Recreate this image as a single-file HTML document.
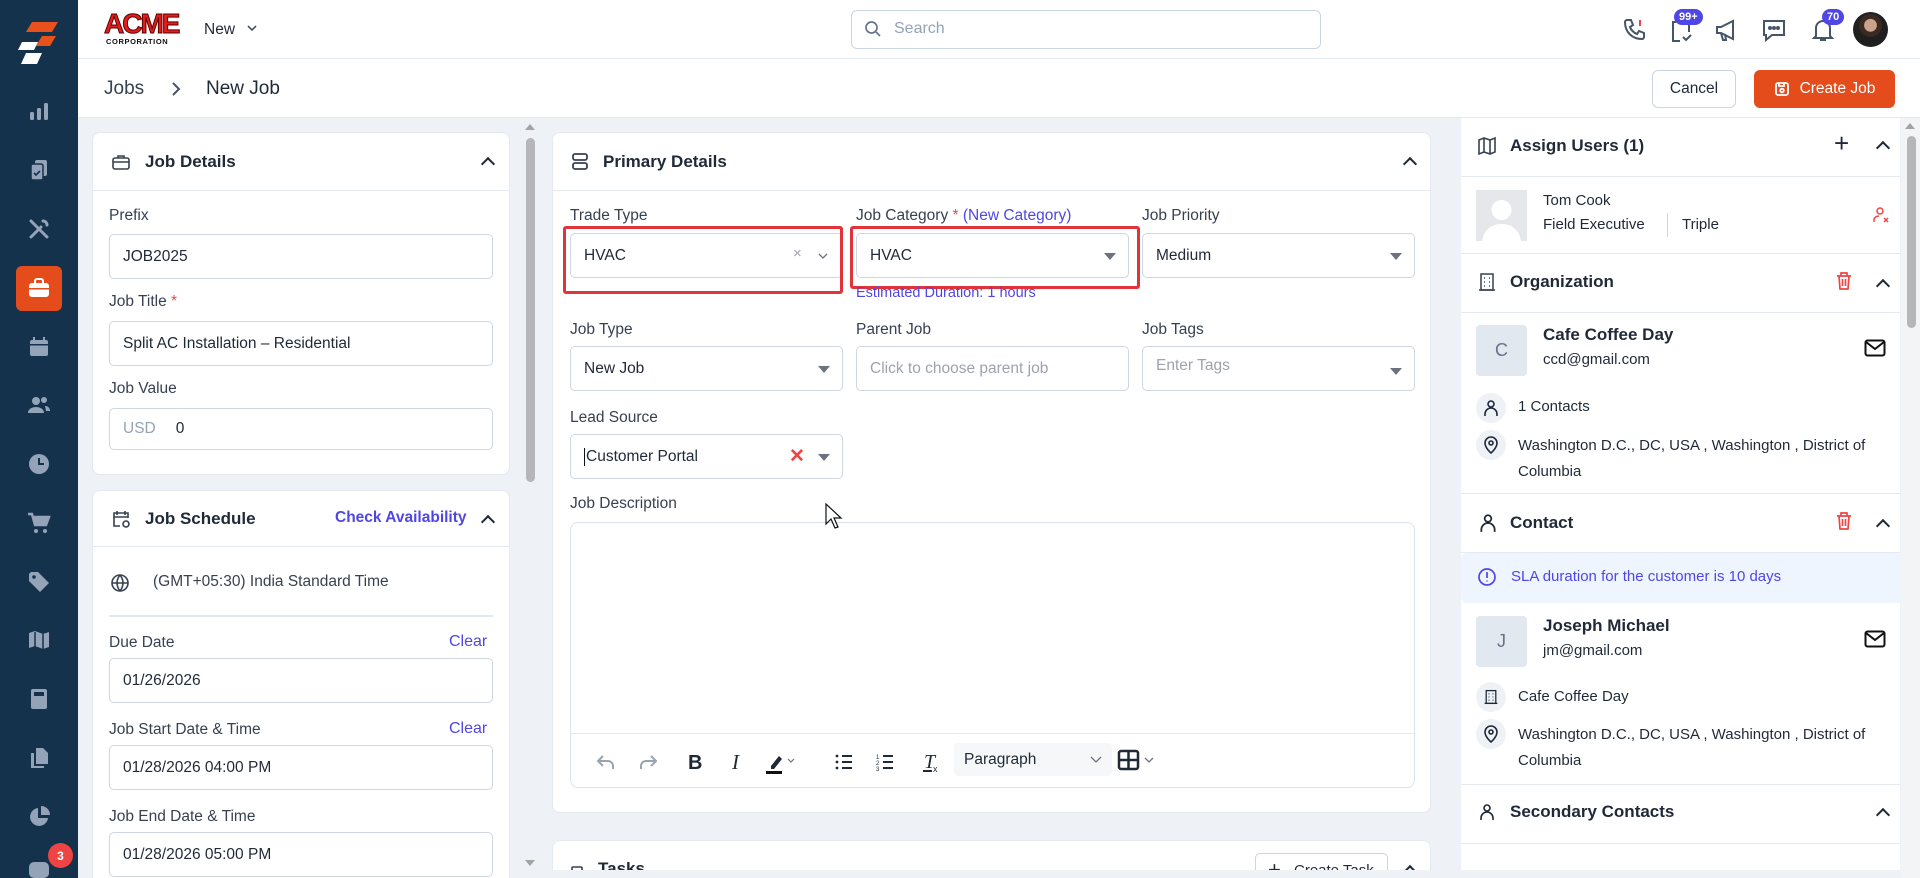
<!DOCTYPE html>
<html style="width:1920px;height:878px;overflow:hidden"><head><meta charset="utf-8"><style>
*{box-sizing:border-box;margin:0;padding:0}
body{width:1920px;height:878px;overflow:hidden;font-family:"Liberation Sans",sans-serif;color:#1f2937;background:#eef2f7;position:relative}
.a{position:absolute}
.sb{left:0;top:0;width:78px;height:878px;background:#14324b}
.ic{position:absolute;left:27px;width:24px;height:24px}
.top{left:78px;top:0;right:0;height:59px;background:#fff;border-bottom:1px solid #e2e8f0}
.bc{left:78px;top:59px;right:0;height:59px;background:#fff;border-bottom:1px solid #e2e8f0}
.card{background:#fff;border-radius:8px;border:1px solid #e5e9f0}
.hd{position:absolute;left:0;right:0;top:0;height:58px;border-bottom:1px solid #e5e9f0;display:flex;align-items:center;padding-left:18px;font-size:17px;font-weight:bold;color:#1f2937}
.lbl{position:absolute;font-size:15.5px;color:#374151}
.inp{position:absolute;height:45px;border:1px solid #cfd6e2;border-radius:5px;background:#fff;font-size:15.5px;color:#1f2937;display:flex;align-items:center;padding-left:13px}
.car{position:absolute;right:12px;top:19px;width:0;height:0;border-left:6px solid transparent;border-right:6px solid transparent;border-top:7px solid #6b7280}
.blue{color:#4f46e5}
.chev{position:absolute;width:10px;height:10px;border-left:2px solid #1f2937;border-top:2px solid #1f2937;transform:rotate(45deg)}
.rs{font-size:15px;color:#1f2937}
.hr{position:absolute;left:1461px;width:439px;height:1px;background:#e5e9f0}
.av{position:absolute;width:51px;height:51px;background:#e2e8f0;border-radius:4px;color:#64748b;font-size:18px;display:flex;align-items:center;justify-content:center}
.circ{position:absolute;width:30px;height:30px;border-radius:50%;background:#eef2f7}
.badge{position:absolute;background:#4f46e5;color:#fff;font-size:11px;font-weight:bold;border-radius:9px;padding:2px 5px}
</style></head><body>

<!-- sidebar -->
<div class="a sb">
 <svg class="a" style="left:16px;top:20px" width="46" height="46" viewBox="0 0 46 46"><polygon points="12,2 38,2 32,12 6,12" fill="#e8501c" transform="translate(4,0)"/><polygon points="26,16 40,16 34,26 20,26" fill="#e8501c"/><polygon points="6,22 22,22 18,30 2,30" fill="#fff"/><polygon points="10,33 26,33 21,44 5,44" fill="#fff"/></svg>
 <svg class="ic" style="top:99px" viewBox="0 0 24 24" fill="#94a3b8"><rect x="3" y="13" width="4" height="8" rx="1.5"/><rect x="10" y="9" width="4" height="12" rx="1.5"/><rect x="17" y="4" width="4" height="17" rx="1.5"/></svg>
 <svg class="ic" style="top:158px" viewBox="0 0 24 24" fill="#94a3b8"><rect x="8" y="2" width="12" height="16" rx="2"/><rect x="4" y="6" width="12" height="16" rx="2" stroke="#14324b" stroke-width="1.5"/><path d="M7 15l2 2 4-4" stroke="#14324b" stroke-width="1.6" fill="none"/></svg>
 <svg class="ic" style="top:217px" viewBox="0 0 24 24" fill="none" stroke="#94a3b8" stroke-width="3" stroke-linecap="round"><path d="M4 20L14 10M16 4a4 4 0 0 1 4 4M4 4l16 16"/></svg>
 <div class="a" style="left:16px;top:266px;width:46px;height:45px;background:#e44d1b;border-radius:6px"></div>
 <svg class="ic" style="top:276px" viewBox="0 0 24 24" fill="#fff"><rect x="2" y="7" width="20" height="14" rx="3"/><path d="M8 7V5a2 2 0 0 1 2-2h4a2 2 0 0 1 2 2v2" stroke="#fff" stroke-width="2" fill="none"/><rect x="2" y="12" width="20" height="1.5" fill="#e44d1b"/></svg>
 <svg class="ic" style="top:335px" viewBox="0 0 24 24" fill="#94a3b8"><rect x="3" y="5" width="18" height="16" rx="2"/><rect x="6" y="2" width="2" height="5"/><rect x="16" y="2" width="2" height="5"/><rect x="3" y="9" width="18" height="1.5" fill="#14324b"/></svg>
 <svg class="ic" style="top:393px" viewBox="0 0 24 24" fill="#94a3b8"><circle cx="9" cy="8" r="4"/><path d="M1 20c0-4 4-6 8-6s8 2 8 6z"/><circle cx="17" cy="7" r="3"/><path d="M18 13c3 0 5 2 5 5h-4z"/></svg>
 <svg class="ic" style="top:452px" viewBox="0 0 24 24"><circle cx="12" cy="12" r="10" fill="#94a3b8"/><path d="M12 6v6h5" stroke="#14324b" stroke-width="2" fill="none"/></svg>
 <svg class="ic" style="top:511px" viewBox="0 0 24 24" fill="#94a3b8"><path d="M1 3h4l3 11h11l3-8H7" stroke="#94a3b8" stroke-width="2.5" fill="#94a3b8"/><circle cx="9" cy="20" r="2"/><circle cx="18" cy="20" r="2"/></svg>
 <svg class="ic" style="top:570px" viewBox="0 0 24 24" fill="#94a3b8"><path d="M2 4v7l11 11 9-9L11 2H4z"/><circle cx="7" cy="7" r="1.8" fill="#14324b"/></svg>
 <svg class="ic" style="top:628px" viewBox="0 0 24 24" fill="#94a3b8"><path d="M2 5l6-2 8 3 6-2v15l-6 2-8-3-6 2z"/><path d="M8 4v15M16 6v15" stroke="#14324b" stroke-width="1.5"/></svg>
 <svg class="ic" style="top:687px" viewBox="0 0 24 24" fill="#94a3b8"><rect x="4" y="2" width="16" height="20" rx="2"/><rect x="7" y="5" width="10" height="4" fill="#14324b"/></svg>
 <svg class="ic" style="top:746px" viewBox="0 0 24 24" fill="#94a3b8"><path d="M9 2h7l5 5v11H9z"/><path d="M4 7h3v13h10v2H4z"/></svg>
 <svg class="ic" style="top:805px" viewBox="0 0 24 24" fill="#94a3b8"><path d="M11 3a9 9 0 1 0 10 10H11z"/><path d="M14 1v9h9a9 9 0 0 0-9-9z"/></svg>
 <svg class="ic" style="top:862px;height:16px" viewBox="0 0 24 16" fill="#94a3b8"><rect x="2" y="0" width="20" height="16" rx="5"/></svg>
 <div class="a" style="left:48px;top:843px;width:25px;height:25px;border-radius:50%;background:#ef4444;color:#fff;font-size:12px;font-weight:bold;display:flex;align-items:center;justify-content:center">3</div>
</div>

<!-- top bar -->
<div class="a top"></div>
<div class="a" style="left:104px;top:10px;font-family:'Liberation Sans',sans-serif;font-weight:bold;font-size:28px;color:#e11d1d;letter-spacing:-2px;line-height:28px;-webkit-text-stroke:1px #5a0000">ACME</div>
<div class="a" style="left:106px;top:37px;font-size:7.5px;font-weight:bold;letter-spacing:0.6px;color:#111">CORPORATION</div>
<div class="a" style="left:204px;top:21px;font-size:15.5px;color:#1f2937">New</div>
<svg class="a" style="left:246px;top:23px" width="12" height="10" viewBox="0 0 12 10"><path d="M2 3l4 4 4-4" stroke="#374151" stroke-width="1.5" fill="none"/></svg>
<div class="a" style="left:851px;top:10px;width:470px;height:39px;border:1px solid #cbd5e1;border-radius:6px"></div>
<svg class="a" style="left:864px;top:20px" width="18" height="18" viewBox="0 0 18 18"><circle cx="7.5" cy="7.5" r="5.5" stroke="#64748b" stroke-width="1.7" fill="none"/><path d="M12 12l4 4" stroke="#64748b" stroke-width="1.7"/></svg>
<div class="a" style="left:894px;top:20px;font-size:16px;color:#94a3b8">Search</div>
<svg class="a" style="left:1621px;top:16px" width="28" height="28" viewBox="0 0 28 28" fill="none" stroke="#475569" stroke-width="2"><path d="M6 4l4 0 2 5-3 2c1 3 4 6 7 7l2-3 5 2v4c0 1-1 2-2 2C11 23 4 16 4 6c0-1 1-2 2-2z"/><path d="M19 4v6" stroke="#ef4444"/></svg>
<svg class="a" style="left:1668px;top:18px" width="26" height="26" viewBox="0 0 26 26" fill="none" stroke="#475569" stroke-width="2"><path d="M8 4H5v19h7M19 4h2v10"/><path d="M15 19l3 3 5-5"/></svg>
<div class="badge" style="left:1674px;top:9px">99+</div>
<svg class="a" style="left:1713px;top:16px" width="28" height="28" viewBox="0 0 28 28" fill="none" stroke="#475569" stroke-width="2"><path d="M4 11v6h4l12 6V5L8 11z"/><path d="M8 17l2 7h3l-1-6"/></svg>
<svg class="a" style="left:1760px;top:16px" width="28" height="28" viewBox="0 0 28 28" fill="none" stroke="#475569" stroke-width="2"><path d="M4 5h20v14H12l-6 5v-5H4z"/><circle cx="10" cy="12" r="1" fill="#475569"/><circle cx="14" cy="12" r="1" fill="#475569"/><circle cx="18" cy="12" r="1" fill="#475569"/></svg>
<svg class="a" style="left:1809px;top:16px" width="28" height="28" viewBox="0 0 28 28" fill="none" stroke="#475569" stroke-width="2"><path d="M7 20V12a7 7 0 0 1 14 0v8l2 2H5z"/><path d="M11 24h6"/></svg>
<div class="badge" style="left:1822px;top:9px">70</div>
<div class="a" style="left:1853px;top:12px;width:35px;height:35px;border-radius:50%;background:radial-gradient(circle at 50% 38%,#c9a38a 0 22%,#3a2a22 24% 40%,#1f1f1f 42%)"></div>

<!-- breadcrumb -->
<div class="a bc"></div>
<div class="a" style="left:104px;top:78px;font-size:19px;color:#374151">Jobs</div>
<svg class="a" style="left:170px;top:81px" width="12" height="16" viewBox="0 0 12 16"><path d="M3 2l6 6-6 6" stroke="#4b5563" stroke-width="2" fill="none"/></svg>
<div class="a" style="left:206px;top:78px;font-size:19px;color:#1f2937">New Job</div>
<div class="a" style="left:1652px;top:70px;width:84px;height:38px;border:1px solid #cbd5e1;border-radius:6px;background:#fff;font-size:15.5px;display:flex;align-items:center;justify-content:center">Cancel</div>
<div class="a" style="left:1754px;top:70px;width:141px;height:38px;background:#e44d1b;border-radius:6px;color:#fff;font-size:15.5px;display:flex;align-items:center;justify-content:center;gap:10px"><svg width="16" height="16" viewBox="0 0 16 16" fill="none" stroke="#fff" stroke-width="1.8"><rect x="2" y="2" width="12" height="12" rx="2"/><circle cx="8" cy="9.5" r="1.8"/><path d="M5 2v3h5V2"/></svg>Create Job</div>

<!-- left column -->
<div class="a card" style="left:92px;top:132px;width:418px;height:343px">
 <div class="hd"><svg width="20" height="20" viewBox="0 0 20 20" fill="none" stroke="#374151" stroke-width="1.6" style="margin-right:14px"><rect x="2" y="6" width="16" height="11" rx="2"/><path d="M7 6V4h6v2M2 10h16"/></svg>Job Details</div>
 <div class="chev" style="left:390px;top:26px"></div>
 <div class="lbl" style="left:16px;top:74px">Prefix</div>
 <div class="inp" style="left:16px;top:101px;width:384px">JOB2025</div>
 <div class="lbl" style="left:16px;top:160px">Job Title <span style="color:#ef4444">*</span></div>
 <div class="inp" style="left:16px;top:188px;width:384px">Split AC Installation – Residential</div>
 <div class="lbl" style="left:16px;top:247px">Job Value</div>
 <div class="inp" style="left:16px;top:275px;width:384px;height:42px"><span style="color:#94a3b8;margin-right:20px">USD</span>0</div>
</div>
<div class="a card" style="left:92px;top:490px;width:418px;height:388px;border-bottom:none;border-radius:8px 8px 0 0">
 <div class="hd" style="height:56px"><svg width="20" height="20" viewBox="0 0 20 20" fill="none" stroke="#374151" stroke-width="1.6" style="margin-right:14px"><path d="M9 17H3V4h14v5M3 8h14M6 2v4M14 2v4"/><circle cx="15" cy="15" r="3"/></svg>Job Schedule</div>
 <div class="a blue" style="left:242px;top:18px;font-size:15.5px;font-weight:bold">Check Availability</div>
 <div class="chev" style="left:390px;top:26px"></div>
 <svg class="a" style="left:17px;top:82px" width="20" height="20" viewBox="0 0 20 20" fill="none" stroke="#374151" stroke-width="1.6"><circle cx="10" cy="10" r="8"/><path d="M2 10h16M10 2c-4 5-4 11 0 16M10 2c4 5 4 11 0 16"/></svg>
 <div class="a" style="left:60px;top:82px;font-size:15.5px;color:#374151">(GMT+05:30) India Standard Time</div>
 <div class="a" style="left:16px;top:124px;width:384px;height:2px;background:#e2e8f0"></div>
 <div class="lbl" style="left:16px;top:143px">Due Date</div><div class="a blue" style="left:356px;top:142px;font-size:16px">Clear</div>
 <div class="inp" style="left:16px;top:167px;width:384px">01/26/2026</div>
 <div class="lbl" style="left:16px;top:230px">Job Start Date &amp; Time</div><div class="a blue" style="left:356px;top:229px;font-size:16px">Clear</div>
 <div class="inp" style="left:16px;top:254px;width:384px">01/28/2026 04:00 PM</div>
 <div class="lbl" style="left:16px;top:317px">Job End Date &amp; Time</div>
 <div class="inp" style="left:16px;top:341px;width:384px">01/28/2026 05:00 PM</div>
</div>
<!-- left scrollbar -->
<div class="a" style="left:524px;top:118px;width:14px;height:760px;background:#eef2f7"></div>
<div class="a" style="left:525px;top:124px;width:0;height:0;border-left:5px solid transparent;border-right:5px solid transparent;border-bottom:6px solid #a3a3a3"></div>
<div class="a" style="left:526px;top:138px;width:9px;height:344px;border-radius:5px;background:#b5b5ba"></div>
<div class="a" style="left:525px;top:860px;width:0;height:0;border-left:5px solid transparent;border-right:5px solid transparent;border-top:6px solid #a3a3a3"></div>

<!-- middle -->
<div class="a card" style="left:552px;top:132px;width:879px;height:681px">
 <div class="hd"><svg width="18" height="20" viewBox="0 0 18 20" fill="none" stroke="#374151" stroke-width="1.8" style="margin-right:14px"><rect x="2" y="2" width="14" height="6" rx="2"/><rect x="2" y="11" width="14" height="6" rx="2"/></svg>Primary Details</div>
 <div class="chev" style="left:852px;top:26px"></div>
 <div class="lbl" style="left:17px;top:74px">Trade Type</div>
 <div class="lbl" style="left:303px;top:74px">Job Category <span style="color:#ef4444">*</span> <span class="blue">(New Category)</span></div>
 <div class="lbl" style="left:589px;top:74px">Job Priority</div>
 <div class="inp" style="left:17px;top:100px;width:273px">HVAC<span class="a" style="left:222px;top:11px;color:#9ca3af;font-size:15px">×</span><svg class="a" style="left:247px;top:18px" width="10" height="8" viewBox="0 0 10 8"><path d="M1 2l4 4 4-4" stroke="#6b7280" stroke-width="1.3" fill="none"/></svg></div>
 <div class="inp" style="left:303px;top:100px;width:273px">HVAC<span class="car"></span></div>
 <div class="inp" style="left:589px;top:100px;width:273px">Medium<span class="car"></span></div>
 <div class="a" style="left:10px;top:93px;width:280px;height:68px;border:3px solid #e0343a;border-radius:3px"></div>
 <div class="a" style="left:297px;top:93px;width:290px;height:63px;border:3px solid #e0343a;border-radius:3px"></div>
 <div class="a blue" style="left:303px;top:152px;font-size:14.5px">Estimated Duration: 1 hours</div>
 <div class="lbl" style="left:17px;top:188px">Job Type</div>
 <div class="lbl" style="left:303px;top:188px">Parent Job</div>
 <div class="lbl" style="left:589px;top:188px">Job Tags</div>
 <div class="inp" style="left:17px;top:213px;width:273px">New Job<span class="car"></span></div>
 <div class="inp" style="left:303px;top:213px;width:273px;color:#9ca3af">Click to choose parent job</div>
 <div class="inp" style="left:589px;top:213px;width:273px;color:#9ca3af;align-items:flex-start;padding-top:10px">Enter Tags<span class="car" style="top:21px"></span></div>
 <div class="lbl" style="left:17px;top:276px">Lead Source</div>
 <div class="inp" style="left:17px;top:301px;width:273px"><span style="border-left:1px solid #111;padding-left:1px">Customer Portal</span><span class="a" style="left:218px;top:10px;color:#ef4444;font-size:19px;font-weight:bold">✕</span><span class="car"></span></div>
 <div class="lbl" style="left:17px;top:362px">Job Description</div>
 <div class="a" style="left:17px;top:389px;width:845px;height:266px;border:1px solid #dde3ec;border-radius:8px">
  <div class="a" style="left:0;right:0;top:210px;height:1px;background:#e5e9f0"></div>
  <svg class="a" style="left:14px;top:225px" width="360" height="28" viewBox="0 0 360 28" fill="none" stroke-width="2">
   <path d="M18 8l-5 5 5 5M13 13h10a5 5 0 0 1 5 5v3" stroke="#9ca3af"/>
   <path d="M66 8l5 5-5 5M71 13H61a5 5 0 0 0-5 5v3" stroke="#9ca3af"/>
   <text x="103" y="21" font-family="Liberation Sans" font-weight="bold" font-size="20" fill="#1f2937" stroke="none">B</text>
   <text x="147" y="21" font-family="Liberation Serif" font-style="italic" font-size="21" fill="#1f2937" stroke="none">I</text>
   <path d="M186 18l8-10 3 3-8 10h-3z" fill="#1f2937" stroke="none"/><rect x="181" y="23" width="16" height="3" fill="#111" stroke="none"/>
   <path d="M203 11l3 3 3-3" stroke="#6b7280" stroke-width="1.2"/>
   <circle cx="252" cy="8" r="1.4" fill="#1f2937" stroke="none"/><circle cx="252" cy="14" r="1.4" fill="#1f2937" stroke="none"/><circle cx="252" cy="20" r="1.4" fill="#1f2937" stroke="none"/>
   <path d="M257 8h10M257 14h10M257 20h10" stroke="#1f2937"/>
   <text x="291" y="11" font-size="6" fill="#1f2937" stroke="none" font-family="Liberation Sans">1</text><text x="291" y="17" font-size="6" fill="#1f2937" stroke="none" font-family="Liberation Sans">2</text><text x="291" y="23" font-size="6" fill="#1f2937" stroke="none" font-family="Liberation Sans">3</text>
   <path d="M298 8h10M298 14h10M298 20h10" stroke="#1f2937"/>
   <text x="339" y="20" font-family="Liberation Serif" font-style="italic" font-size="20" fill="#1f2937" stroke="none">T</text><path d="M338 23h9" stroke="#1f2937"/><text x="348" y="24" font-size="9" fill="#1f2937" stroke="none" font-family="Liberation Sans">x</text>
  </svg>
  <div class="a" style="left:383px;top:220px;width:158px;height:33px;background:#f6f7f9;border-radius:4px;font-size:15.5px;color:#1f2937;padding:8px 0 0 10px">Paragraph<svg class="a" style="left:136px;top:13px" width="12" height="8" viewBox="0 0 12 8"><path d="M1 1l5 5 5-5" stroke="#6b7280" stroke-width="1.3" fill="none"/></svg></div>
  <svg class="a" style="left:546px;top:226px" width="46" height="22" viewBox="0 0 46 22"><rect x="2" y="2" width="19" height="18" rx="2" fill="none" stroke="#1f2937" stroke-width="2.5"/><path d="M2 11h19M11.5 2v18" stroke="#1f2937" stroke-width="2.5"/><path d="M28 9l4 4 4-4" stroke="#6b7280" stroke-width="1.3" fill="none"/></svg>
 </div>
</div>
<div class="a card" style="left:552px;top:840px;width:879px;height:38px;border-bottom:none;border-radius:8px 8px 0 0">
 <svg class="a" style="left:17px;top:24px" width="14" height="16" viewBox="0 0 14 16" fill="none" stroke="#374151" stroke-width="1.6"><rect x="2" y="2" width="10" height="13" rx="1"/><path d="M5 6h4M5 9h4"/></svg>
 <div class="a" style="left:45px;top:18px;font-size:17px;font-weight:bold">Tasks</div>
 <div class="a" style="left:702px;top:12px;width:133px;height:36px;border:1px solid #cbd5e1;border-radius:5px;font-size:15px;padding:8px 0 0 38px">Create Task<span class="a" style="left:12px;top:3px;font-size:22px;font-weight:normal">+</span></div>
 <div class="chev" style="left:852px;top:26px"></div>
</div>
<div class="a" style="left:538px;top:870px;width:1382px;height:8px;background:#eef2f7"></div>

<!-- right panel -->
<div class="a" style="left:1461px;top:118px;width:439px;height:752px;background:#fff"></div>
<svg class="a" style="left:1477px;top:136px" width="20" height="20" viewBox="0 0 20 20" fill="none" stroke="#374151" stroke-width="1.6"><path d="M2 4l5-2 6 2 5-2v14l-5 2-6-2-5 2zM7 2v14M13 4v14"/></svg>
<div class="a" style="left:1510px;top:136px;font-size:17px;font-weight:bold">Assign Users (1)</div>
<div class="a" style="left:1834px;top:128px;font-size:26px;color:#1f2937;font-weight:300">+</div>
<div class="chev" style="left:1878px;top:143px"></div>
<div class="hr" style="top:176px"></div>
<div class="a" style="left:1476px;top:190px;width:51px;height:51px;background:#e5e7eb;overflow:hidden"><svg width="51" height="51" viewBox="0 0 51 51"><circle cx="25.5" cy="20" r="10" fill="#fff"/><path d="M6 51c2-12 10-17 19.5-17S43 39 45 51z" fill="#fff"/></svg></div>
<div class="a rs" style="left:1543px;top:192px">Tom Cook</div>
<div class="a rs" style="left:1543px;top:216px">Field Executive</div>
<div class="a" style="left:1667px;top:213px;width:1px;height:24px;background:#cbd5e1"></div>
<div class="a rs" style="left:1682px;top:216px">Triple</div>
<svg class="a" style="left:1872px;top:205px" width="20" height="20" viewBox="0 0 20 20" fill="none" stroke="#ef4444" stroke-width="1.5"><circle cx="8" cy="6" r="3"/><path d="M2 17v-2c0-2 2-4 5-4M12 13l4 4M16 13l-4 4"/></svg>
<div class="hr" style="top:253px"></div>
<svg class="a" style="left:1477px;top:272px" width="20" height="20" viewBox="0 0 20 20" fill="none" stroke="#374151" stroke-width="1.5"><rect x="4" y="2" width="12" height="16"/><path d="M2 18h16M7 6h1M12 6h1M7 10h1M12 10h1M7 14h1M12 14h1"/></svg>
<div class="a" style="left:1510px;top:272px;font-size:17px;font-weight:bold">Organization</div>
<svg class="a" style="left:1835px;top:271px" width="18" height="20" viewBox="0 0 18 20" fill="none" stroke="#ef4444" stroke-width="1.7"><path d="M2 5h14M6 5V2h6v3M4 5l1 13h8l1-13M7.5 8v7M10.5 8v7"/></svg>
<div class="chev" style="left:1878px;top:281px"></div>
<div class="hr" style="top:312px"></div>
<div class="av" style="left:1476px;top:325px">C</div>
<div class="a" style="left:1543px;top:325px;font-size:17px;font-weight:bold">Cafe Coffee Day</div>
<div class="a rs" style="left:1543px;top:351px">ccd@gmail.com</div>
<svg class="a" style="left:1864px;top:339px" width="22" height="18" viewBox="0 0 22 18" fill="none" stroke="#111" stroke-width="2"><rect x="1.5" y="1.5" width="19" height="15" rx="2"/><path d="M2 3l9 7 9-7"/></svg>
<div class="circ" style="left:1476px;top:393px"></div>
<svg class="a" style="left:1483px;top:399px" width="16" height="18" viewBox="0 0 16 18" fill="none" stroke="#1f2937" stroke-width="1.6"><circle cx="8" cy="5" r="3"/><path d="M2 17v-2a5 5 0 0 1 12 0v2"/></svg>
<div class="a rs" style="left:1518px;top:398px">1 Contacts</div>
<div class="circ" style="left:1476px;top:430px"></div>
<svg class="a" style="left:1483px;top:436px" width="16" height="18" viewBox="0 0 16 18" fill="none" stroke="#1f2937" stroke-width="1.6"><path d="M8 17s6-5 6-10A6 6 0 0 0 2 7c0 5 6 10 6 10z"/><circle cx="8" cy="7" r="2"/></svg>
<div class="a rs" style="left:1518px;top:433px;line-height:26px;width:380px">Washington D.C., DC, USA , Washington , District of Columbia</div>
<div class="hr" style="top:493px"></div>
<svg class="a" style="left:1479px;top:513px" width="18" height="20" viewBox="0 0 16 18" fill="none" stroke="#1f2937" stroke-width="1.6"><circle cx="8" cy="5" r="3"/><path d="M2 17v-2a5 5 0 0 1 12 0v2"/></svg>
<div class="a" style="left:1510px;top:513px;font-size:17px;font-weight:bold">Contact</div>
<svg class="a" style="left:1835px;top:511px" width="18" height="20" viewBox="0 0 18 20" fill="none" stroke="#ef4444" stroke-width="1.7"><path d="M2 5h14M6 5V2h6v3M4 5l1 13h8l1-13M7.5 8v7M10.5 8v7"/></svg>
<div class="chev" style="left:1878px;top:521px"></div>
<div class="hr" style="top:552px"></div>
<div class="a" style="left:1461px;top:553px;width:445px;height:50px;background:#eff5ff;border-radius:6px"></div>
<svg class="a" style="left:1477px;top:567px" width="20" height="20" viewBox="0 0 20 20" fill="none" stroke="#4f46e5" stroke-width="1.7"><circle cx="10" cy="10" r="8"/><path d="M10 5v6M10 13.5v1"/></svg>
<div class="a blue" style="left:1511px;top:568px;font-size:15px">SLA duration for the customer is 10 days</div>
<div class="av" style="left:1476px;top:616px">J</div>
<div class="a" style="left:1543px;top:616px;font-size:17px;font-weight:bold">Joseph Michael</div>
<div class="a rs" style="left:1543px;top:642px">jm@gmail.com</div>
<svg class="a" style="left:1864px;top:630px" width="22" height="18" viewBox="0 0 22 18" fill="none" stroke="#111" stroke-width="2"><rect x="1.5" y="1.5" width="19" height="15" rx="2"/><path d="M2 3l9 7 9-7"/></svg>
<div class="circ" style="left:1476px;top:682px"></div>
<svg class="a" style="left:1483px;top:688px" width="16" height="18" viewBox="0 0 20 20" fill="none" stroke="#1f2937" stroke-width="1.6"><rect x="4" y="2" width="12" height="16"/><path d="M2 18h16M7 6h1M12 6h1M7 10h1M12 10h1M7 14h1M12 14h1"/></svg>
<div class="a rs" style="left:1518px;top:688px">Cafe Coffee Day</div>
<div class="circ" style="left:1476px;top:719px"></div>
<svg class="a" style="left:1483px;top:725px" width="16" height="18" viewBox="0 0 16 18" fill="none" stroke="#1f2937" stroke-width="1.6"><path d="M8 17s6-5 6-10A6 6 0 0 0 2 7c0 5 6 10 6 10z"/><circle cx="8" cy="7" r="2"/></svg>
<div class="a rs" style="left:1518px;top:722px;line-height:26px;width:380px">Washington D.C., DC, USA , Washington , District of Columbia</div>
<div class="hr" style="top:784px"></div>
<svg class="a" style="left:1479px;top:803px" width="16" height="18" viewBox="0 0 16 18" fill="none" stroke="#1f2937" stroke-width="1.6"><circle cx="8" cy="5" r="3"/><path d="M2 17v-2a5 5 0 0 1 12 0v2"/></svg>
<div class="a" style="left:1510px;top:802px;font-size:17px;font-weight:bold">Secondary Contacts</div>
<div class="chev" style="left:1878px;top:810px"></div>
<div class="hr" style="top:843px"></div>
<!-- right scrollbar -->
<div class="a" style="left:1901px;top:118px;width:19px;height:760px;background:#f3f4f6"></div>
<div class="a" style="left:1905px;top:123px;width:0;height:0;border-left:5px solid transparent;border-right:5px solid transparent;border-bottom:6px solid #a3a3a3"></div>
<div class="a" style="left:1907px;top:136px;width:9px;height:192px;border-radius:5px;background:#b5b5ba"></div>
<!-- cursor -->
<svg class="a" style="left:824px;top:502px" width="20" height="28" viewBox="0 0 20 28"><path d="M2 2v20l5-5 4 9 3-1-4-9h7z" fill="#fff" stroke="#111" stroke-width="1.2"/></svg>
</body></html>
